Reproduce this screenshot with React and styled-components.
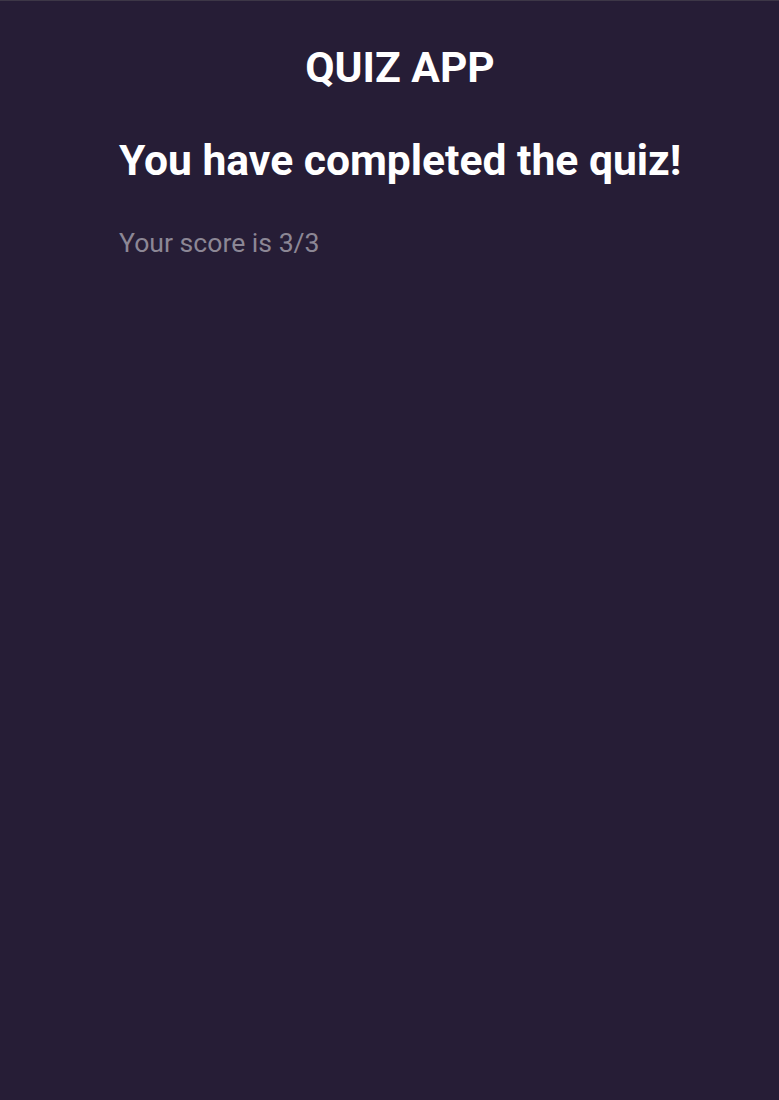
import { createGlobalStyle, styled } from "styled-components";

const GlobalStyle = createGlobalStyle`
  html, body {
    margin: 0;
    padding: 0;
    background: #261d36;
  }
  body {
    font-family: Roboto, "Liberation Sans", sans-serif;
    color: #ffffff;
  }
`;

const Page = styled.div`
  min-height: 1100px;
  box-sizing: border-box;
  border-top: 1px solid #3d3747;
  background: #261d36;
  padding: 0 98px 0 119px;
`;

const Container = styled.main`
  display: flex;
  flex-direction: column;
`;

const AppTitle = styled.h1`
  margin: 43px 0 0;
  text-align: center;
  font-size: 42.5px;
  line-height: 48px;
  font-weight: 700;
  color: #ffffff;
`;

const Heading = styled.h2`
  margin: 43px 0 0;
  font-size: 42.6px;
  line-height: 50px;
  font-weight: 700;
  color: #ffffff;
  white-space: nowrap;
`;

const Score = styled.p`
  margin: 42px 0 0;
  font-size: 26.6px;
  line-height: 32px;
  font-weight: 400;
  color: #8c8795;
`;

const App = () => {
  const score = 3;
  const total = 3;

  return (
    <>
      <GlobalStyle />
      <Page>
        <Container>
          <AppTitle>QUIZ APP</AppTitle>
          <Heading>You have completed the quiz!</Heading>
          <Score>
            Your score is {score}/{total}
          </Score>
        </Container>
      </Page>
    </>
  );
};

export default App;
